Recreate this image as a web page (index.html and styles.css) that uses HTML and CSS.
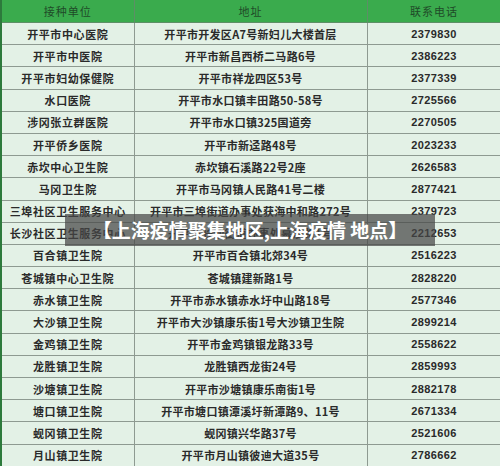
FILE: index.html
```html
<!DOCTYPE html>
<html lang="zh">
<head>
<meta charset="utf-8">
<link rel="stylesheet" href="styles.css">
</head>
<body>
<div class="page">
<table class="list">
<colgroup><col class="c1"><col class="c2"><col class="c3"></colgroup>
<thead>
<tr><th>接种单位</th><th>地址</th><th>联系电话</th></tr>
</thead>
<tbody>
<tr><td>开平市中心医院</td><td>开平市开发区A7号新妇儿大楼首层</td><td>2379830</td></tr>
<tr><td>开平市中医院</td><td>开平市新昌西桥二马路6号</td><td>2386223</td></tr>
<tr><td>开平市妇幼保健院</td><td>开平市祥龙四区53号</td><td>2377339</td></tr>
<tr><td>水口医院</td><td>开平市水口镇丰田路50-58号</td><td>2725566</td></tr>
<tr><td>涉冈张立群医院</td><td>开平市水口镇325国道旁</td><td>2270505</td></tr>
<tr><td>开平侨乡医院</td><td>开平市新迳路48号</td><td>2023233</td></tr>
<tr><td>赤坎中心卫生院</td><td>赤坎镇石溪路22号2座</td><td>2626583</td></tr>
<tr><td>马冈卫生院</td><td>开平市马冈镇人民路41号二楼</td><td>2877421</td></tr>
<tr><td>三埠社区卫生服务中心</td><td>开平市三埠街道办事处获海中和路272号</td><td>2379723</td></tr>
<tr><td>长沙社区卫生服务中心</td><td>开平市长沙街道办事处幕沙路1号</td><td>2212653</td></tr>
<tr><td>百合镇卫生院</td><td>开平市百合镇北郊34号</td><td>2516223</td></tr>
<tr><td>苍城镇中心卫生院</td><td>苍城镇建新路1号</td><td>2828220</td></tr>
<tr><td>赤水镇卫生院</td><td>开平市赤水镇赤水圩中山路18号</td><td>2577346</td></tr>
<tr><td>大沙镇卫生院</td><td>开平市大沙镇康乐街1号大沙镇卫生院</td><td>2899214</td></tr>
<tr><td>金鸡镇卫生院</td><td>开平市金鸡镇银龙路33号</td><td>2558622</td></tr>
<tr><td>龙胜镇卫生院</td><td>龙胜镇西龙街24号</td><td>2859993</td></tr>
<tr><td>沙塘镇卫生院</td><td>开平市沙塘镇康乐南街1号</td><td>2882178</td></tr>
<tr><td>塘口镇卫生院</td><td>开平市塘口镇潭溪圩新潭路9、11号</td><td>2671334</td></tr>
<tr><td>蚬冈镇卫生院</td><td>蚬冈镇兴华路37号</td><td>2521606</td></tr>
<tr><td>月山镇卫生院</td><td>开平市月山镇彼迪大道35号</td><td>2786662</td></tr>
</tbody>
</table>
<div class="banner">【上海疫情聚集地区,上海疫情 地点】</div>
</div>
</body>
</html>
```
FILE: styles.css
```css
html, body {
  margin: 0;
  padding: 0;
  background: #e3f1e6;
}
.page {
  position: relative;
  width: 500px;
  height: 466px;
  overflow: hidden;
  font-family: "Noto Sans CJK SC", "Noto Sans", sans-serif;
}
.list {
  width: 500px;
  border-collapse: collapse;
  table-layout: fixed;
  border-left: 2px solid #2d7a3c;
}
.c1 { width: 133px; }
.c2 { width: 233px; }
.c3 { width: 134px; }
.list th {
  height: 22px;
  padding: 0;
  background: #3aab4d;
  color: #1f4a28;
  font-size: 11px;
  font-weight: 400;
  letter-spacing: 1px;
  text-align: center;
  border-right: 1px solid #5d8f66;
  border-bottom: 1px solid #5d8f66;
}
.list td {
  height: 21.2px;
  padding: 0;
  background: #e3f1e6;
  color: #2a2a2a;
  font-size: 11px;
  font-weight: 700;
  text-align: center;
  white-space: nowrap;
  border: 1px solid #8e9a91;
  border-left: none;
  line-height: 14px;
}
.list td:nth-child(1) { letter-spacing: 0.6px; }
.list td:nth-child(2) { letter-spacing: 0.3px; }
.list td:nth-child(3) { font-family: "Liberation Sans", sans-serif; font-size: 11px; letter-spacing: 0.4px; }
.banner {
  position: absolute;
  left: 65px;
  top: 214px;
  width: 370px;
  height: 32px;
  background: rgba(70, 70, 70, 0.72);
  color: #fff;
  font-size: 19px;
  font-weight: 700;
  line-height: 32px;
  text-align: center;
  white-space: nowrap;
}
```
